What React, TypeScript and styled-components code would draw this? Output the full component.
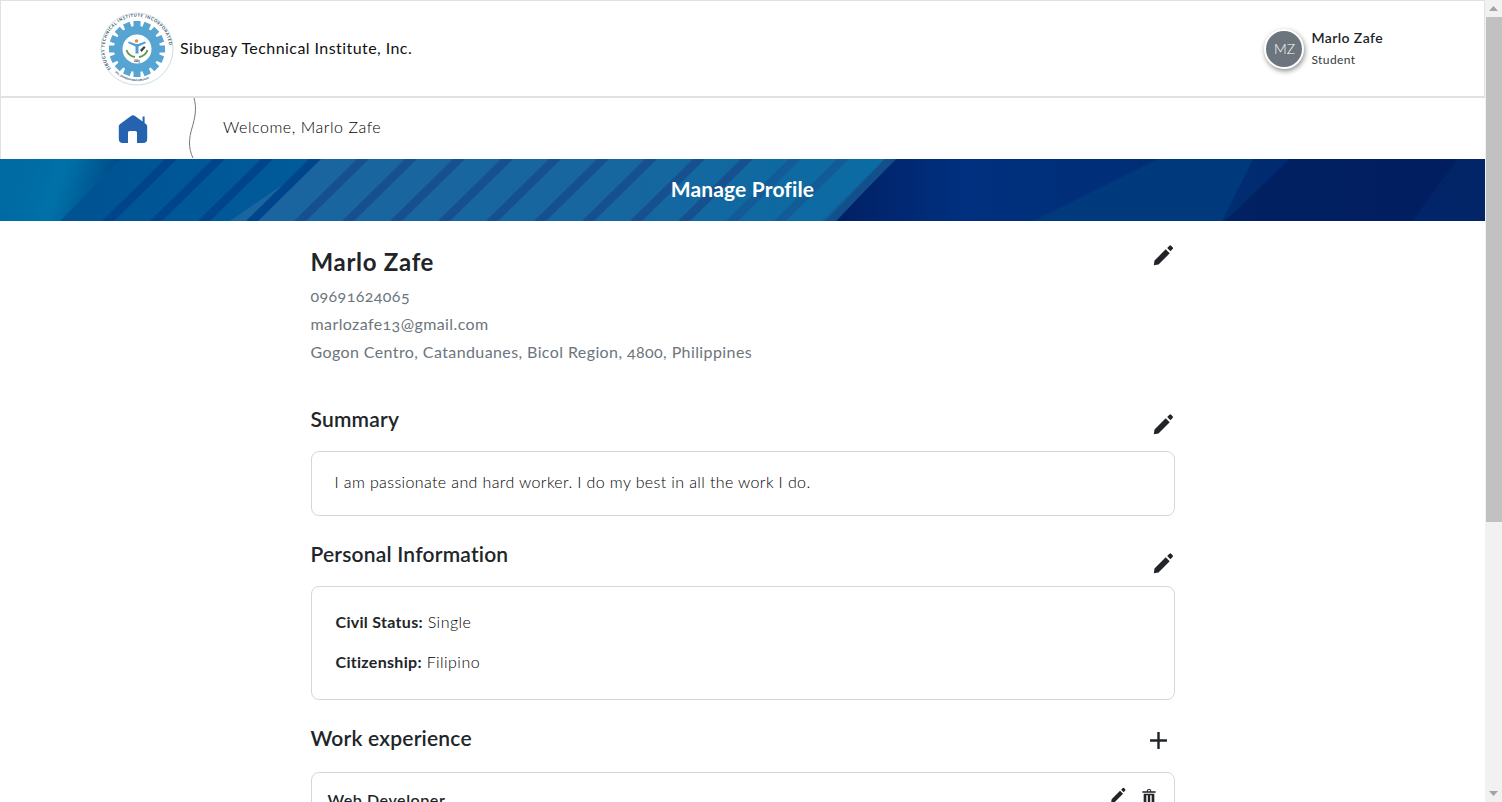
import React from "react";
import styled, { createGlobalStyle } from "styled-components";

const Global = createGlobalStyle`
  body { margin: 0; background: #fff; color: #212529; font-family: Lato, "Liberation Sans", sans-serif; font-size: 16px; font-feature-settings: "onum" 1; font-variant-numeric: oldstyle-nums; }
  * { box-sizing: border-box; }
`;

const Page = styled.div`
  display: flex;
  flex-direction: column;
  min-height: 1220px;
  margin-right: 17px;
`;
const ScrollTrack = styled.div`
  position: fixed;
  top: 0;
  right: 0;
  bottom: 0;
  width: 17px;
  background: #f1f1f1;
  display: flex;
  flex-direction: column;
  justify-content: space-between;
`;
const ScrollThumb = styled.div`
  position: absolute;
  top: 17px;
  left: 1px;
  right: 0;
  height: 505px;
  background: #c1c1c1;
`;
const ScrollArrow = styled.svg`
  display: block;
  width: 17px;
  height: 17px;
  fill: #a3a3a3;
`;
const Header = styled.header`
  height: 98px;
  border: 1px solid #dee2e6;
  border-bottom-width: 2px;
  display: flex;
  align-items: center;
  justify-content: space-between;
  padding: 0 101px 0 99px;
`;
const Brand = styled.div`
  display: flex;
  align-items: center;
  gap: 6px;
`;
const BrandName = styled.span`
  font-size: 16px;
  color: #111;
  letter-spacing: 0.44px;
  margin-bottom: 2px;
`;
const User = styled.div`
  display: flex;
  align-items: center;
  gap: 7px;
`;
const Avatar = styled.div`
  width: 40px;
  height: 40px;
  border-radius: 50%;
  background: #6c757d;
  border: 2px solid #fff;
  box-shadow: 1px 2px 5px rgba(0, 0, 0, 0.45);
  color: #fff;
  display: flex;
  align-items: center;
  justify-content: center;
  font-size: 14px;
  font-weight: 300;
`;
const UserText = styled.div`
  display: flex;
  flex-direction: column;
  gap: 5px;
  margin-bottom: 1px;
`;
const UserName = styled.span`
  font-size: 14px;
  font-weight: 600;
  color: #212529;
  line-height: 18px;
  letter-spacing: 0.4px;
`;
const UserRole = styled.span`
  font-size: 12px;
  color: #343a40;
  line-height: 16px;
  letter-spacing: 0.4px;
`;
const SubNav = styled.nav`
  height: 61px;
  border-left: 1px solid #dee2e6;
  display: flex;
  align-items: center;
  padding-left: 117px;
`;
const Curve = styled.svg`
  margin-left: 40px;
  flex: none;
  align-self: flex-start;
`;
const Welcome = styled.span`
  margin: 0 0 5px 23px;
  font-size: 16px;
  font-weight: 300;
  color: #000;
  letter-spacing: 0.55px;
`;
const Banner = styled.div`
  position: relative;
  height: 62px;
  overflow: hidden;
  display: flex;
  align-items: center;
  justify-content: center;
  background: #012a6e;
`;
const BannerArt = styled.svg`
  position: absolute;
  inset: 0;
`;
const BannerTitle = styled.h1`
  position: relative;
  margin: 0 0 3px;
  color: #fff;
  font-size: 21px;
  font-weight: 700;
  letter-spacing: 0.15px;
`;
const Main = styled.main`
  width: 864px;
  margin: 0 auto;
  padding-top: 23px;
  display: flex;
  flex-direction: column;
`;
const TitleRow = styled.div<{ $h: number }>`
  display: flex;
  justify-content: space-between;
  align-items: flex-start;
  height: ${(p) => p.$h}px;
`;
const Name = styled.h2`
  margin: 0;
  font-size: 24px;
  font-weight: 700;
  line-height: 36px;
  letter-spacing: 0.7px;
`;
const ContactLine = styled.p`
  margin: 0;
  color: #6c757d;
  font-size: 16px;
  line-height: 28px;
  letter-spacing: 0.4px;
`;
const Contact = styled.div`
  margin-top: 2px;
  margin-bottom: 38px;
`;
const SectionTitle = styled.h3`
  margin: 0;
  font-size: 21px;
  font-weight: 600;
  line-height: 30px;
  letter-spacing: 0.2px;
`;
const IconBtn = styled.button<{ $size: number; $top: number; $right: number }>`
  border: 0;
  background: none;
  padding: 0;
  flex: none;
  width: ${(p) => p.$size}px;
  height: ${(p) => p.$size}px;
  margin: ${(p) => p.$top}px ${(p) => p.$right}px 0 0;
  color: #212529;
  display: block;
  svg { display: block; width: 100%; height: 100%; fill: currentColor; fill-rule: evenodd; }
`;
const Section = styled.section`
  display: flex;
  flex-direction: column;
`;
const Box = styled.div<{ $pad: string; $mb: number }>`
  border: 1px solid #d3d7db;
  border-radius: 8px;
  padding: ${(p) => p.$pad};
  margin-bottom: ${(p) => p.$mb}px;
`;
const BoxText = styled.p`
  margin: 0;
  font-weight: 300;
  color: #000;
  line-height: 24px;
  letter-spacing: 0.38px;
`;
const Field = styled.p`
  margin: 0 0 16px;
  font-weight: 300;
  color: #000;
  line-height: 24px;
  letter-spacing: 0.45px;
  &:last-child { margin-bottom: 0; }
  b { font-weight: 700; color: #212529; letter-spacing: 0.3px; }
`;
const CardHead = styled.div`
  display: flex;
  justify-content: space-between;
  align-items: flex-start;
`;
const CardTitle = styled.h4`
  margin: 0;
  font-size: 16px;
  font-weight: 600;
  line-height: 24px;
  letter-spacing: 0.55px;
`;
const CardActions = styled.div`
  display: flex;
  gap: 14px;
`;
const CardMeta = styled.p`
  margin: 4px 0 0;
  color: #6c757d;
  line-height: 24px;
`;

const EDIT = "M2.8 22.2l.7-4.7 11.2-11.2 4 4L7.5 21.5zM16.2 5l2.2-2.2a1.2 1.2 0 0 1 1.7 0l1.5 1.5a1.2 1.2 0 0 1 0 1.7l-2.2 2.2z";
const ADD = "M19 13h-6v6h-2v-6H5v-2h6V5h2v6h6v2z";
const TRASH = "M2 5h6.4a3.6 3.6 0 0 1 7.2 0H22v2.2H2zM10 5h4a2 2 0 0 0-4 0zM4 8.5h16V23H4zM8 11v10h2.2V11zM13.8 11v10H16V11z";

function Icon({ d, size, top = 0, right = 0 }: { d: string; size: number; top?: number; right?: number }) {
  return (
    <IconBtn $size={size} $top={top} $right={right} aria-label="action">
      <svg viewBox="0 0 24 24"><path d={d} /></svg>
    </IconBtn>
  );
}

function Logo() {
  const teeth = Array.from({ length: 16 }, (_, i) => (i * 360) / 16);
  return (
    <svg width="74" height="74" viewBox="0 0 74 74">
      <defs>
        <path id="arcTop" d="M11 57a32.6 32.6 0 1 1 52 0" />
        <path id="arcBot" d="M5.5 44a32.3 32.3 0 0 0 63 0" />
      </defs>
      <circle cx="37" cy="37" r="36" fill="#fff" stroke="#c9dfe6" strokeWidth="1" />
      {teeth.map((a) => (
        <rect key={a} x="33.5" y="9" width="7" height="7" fill="#55a4d2" transform={`rotate(${a} 37 37)`} />
      ))}
      <circle cx="37" cy="37" r="23" fill="#55a4d2" />
      <circle cx="37" cy="37" r="14.5" fill="#fff" />
      <path d="M28 31l7.5 3.5v7h3v-7L46 31l-.8-1.6-7.2 2.6h-2l-7.2-2.6z" fill="#4d9fd6" />
      <circle cx="36.5" cy="29" r="1.7" fill="#e8863a" />
      <path d="M40 38l4-4 1.6 1.6-4 4.4z" fill="#444" />
      <path d="M26.5 38c1.5 5 5 6.5 8.5 7M47.5 38c-1.5 5-5 6.5-8.5 7" fill="none" stroke="#5c9a4c" strokeWidth="1.8" />
      <text x="37" y="49.5" fontSize="2.8" fontWeight="700" textAnchor="middle" fill="#222">2003</text>
      <text fontSize="4.1" fontWeight="700" fill="#2b4a5e" letterSpacing="0.6">
        <textPath href="#arcTop">SIBUGAY TECHNICAL INSTITUTE INCORPORATED</textPath>
      </text>
      <text fontSize="2.8" fontWeight="700" fill="#2b4a5e">
        <textPath href="#arcBot" startOffset="22%">IPIL, ZAMBOANGA SIBUGAY</textPath>
      </text>
    </svg>
  );
}

function BannerDrawing() {
  const stripes = Array.from({ length: 16 }, (_, i) => 102 + i * 48);
  return (
    <BannerArt width="100%" height="62" viewBox="0 0 1485 62" preserveAspectRatio="none">
      <defs>
        <linearGradient id="bLeft" gradientUnits="userSpaceOnUse" x1="20" y1="10" x2="110" y2="40">
          <stop offset="0" stopColor="#006aa3" />
          <stop offset="0.45" stopColor="#0071a8" />
          <stop offset="1" stopColor="#004a85" />
        </linearGradient>
        <linearGradient id="bBase" gradientUnits="userSpaceOnUse" x1="60" y1="0" x2="330" y2="0">
          <stop offset="0" stopColor="#005292" />
          <stop offset="1" stopColor="#005c9b" />
        </linearGradient>
        <linearGradient id="bLight" gradientUnits="userSpaceOnUse" x1="230" y1="0" x2="890" y2="0">
          <stop offset="0" stopColor="#1b659f" />
          <stop offset="0.6" stopColor="#16669f" />
          <stop offset="1" stopColor="#0a6ca3" />
        </linearGradient>
        <linearGradient id="bDark" gradientUnits="userSpaceOnUse" x1="830" y1="0" x2="1485" y2="0">
          <stop offset="0" stopColor="#011f63" />
          <stop offset="0.2" stopColor="#00307f" />
          <stop offset="0.6" stopColor="#012d73" />
          <stop offset="0.85" stopColor="#01256a" />
          <stop offset="1" stopColor="#012566" />
        </linearGradient>
      </defs>
      <rect x="830" width="655" height="62" fill="url(#bDark)" />
      <polygon points="1158,0 1253,0 1222,62 1033,62" fill="#003a7c" />
      <polygon points="1290,0 1458,0 1412,62 1225,62" fill="#011e5e" opacity="0.75" />
      <polygon points="0,0 125,0 64,62 0,62" fill="url(#bLeft)" />
      <polygon points="60,62 121,0 895,0 836,62" fill="url(#bBase)" />
      <polygon points="230,62 320,0 885,0 826,62" fill="url(#bLight)" />
      <polygon points="885,0 895,0 836,62 826,62" fill="#0f4f85" />
      {stripes.map((x) => (
        <polygon
          key={x}
          points={`${x},62 ${x + 12},62 ${x + 75},0 ${x + 63},0`}
          fill={x < 250 ? "#00458c" : "#16508f"}
          opacity={x > 700 ? 0.55 : 1}
        />
      ))}
    </BannerArt>
  );
}

export default function App() {
  return (
    <Page>
      <Global />
      <Header>
        <Brand>
          <Logo />
          <BrandName>Sibugay Technical Institute, Inc.</BrandName>
        </Brand>
        <User>
          <Avatar>MZ</Avatar>
          <UserText>
            <UserName>Marlo Zafe</UserName>
            <UserRole>Student</UserRole>
          </UserText>
        </User>
      </Header>
      <SubNav>
        <svg width="30" height="30" viewBox="0 0 30 30">
          <path fill="#2563b0" d="M13 2a3.2 3.2 0 0 1 4 0l7.6 5.4V2.6h2v6.3l1.6 1.3a2.6 2.6 0 0 1 1 2V25a4 4 0 0 1-4 4H19V18.6a1.6 1.6 0 0 0-1.6-1.6h-5.8a1.6 1.6 0 0 0-1.6 1.6V29H4.8a4 4 0 0 1-4-4V12.2a2.6 2.6 0 0 1 1-2z" />
        </svg>
        <Curve width="12" height="60" viewBox="0 0 12 60">
          <path d="M6 0C9 10 7 20 4 30 1 40 0 50 5 60" fill="none" stroke="#777" strokeWidth="1" />
        </Curve>
        <Welcome>Welcome, Marlo Zafe</Welcome>
      </SubNav>
      <Banner>
        <BannerDrawing />
        <BannerTitle>Manage Profile</BannerTitle>
      </Banner>
      <Main>
        <TitleRow $h={36}>
          <Name>Marlo Zafe</Name>
          <Icon d={EDIT} size={24} top={-1} />
        </TitleRow>
        <Contact>
          <ContactLine>09691624065</ContactLine>
          <ContactLine>marlozafe13@gmail.com</ContactLine>
          <ContactLine>Gogon Centro, Catanduanes, Bicol Region, 4800, Philippines</ContactLine>
        </Contact>
        <Section>
          <TitleRow $h={47}>
            <SectionTitle>Summary</SectionTitle>
            <Icon d={EDIT} size={24} top={8} />
          </TitleRow>
          <Box $pad="18px 23px 21px" $mb={23}>
            <BoxText>I am passionate and hard worker. I do my best in all the work I do.</BoxText>
          </Box>
        </Section>
        <Section>
          <TitleRow $h={47}>
            <SectionTitle>Personal Information</SectionTitle>
            <Icon d={EDIT} size={24} top={12} />
          </TitleRow>
          <Box $pad="23px 24px 25px" $mb={23}>
            <Field><b>Civil Status:</b> Single</Field>
            <Field><b>Citizenship:</b> Filipino</Field>
          </Box>
        </Section>
        <Section>
          <TitleRow $h={49}>
            <SectionTitle>Work experience</SectionTitle>
            <Icon d={ADD} size={29} top={3} right={2} />
          </TitleRow>
          <Box $pad="15px 16px 20px" $mb={24}>
            <CardHead>
              <CardTitle>Web Developer</CardTitle>
              <CardActions>
                <Icon d={EDIT} size={18} top={-2} />
                <Icon d={TRASH} size={16} right={1} />
              </CardActions>
            </CardHead>
            <CardMeta>Sibugay Technical Institute, Inc.</CardMeta>
          </Box>
        </Section>
      </Main>
      <ScrollTrack>
        <ScrollArrow viewBox="0 0 17 17"><path d="M8.5 6l4.5 5H4z" /></ScrollArrow>
        <ScrollThumb />
        <ScrollArrow viewBox="0 0 17 17"><path d="M8.5 11L4 6h9z" /></ScrollArrow>
      </ScrollTrack>
    </Page>
  );
}
